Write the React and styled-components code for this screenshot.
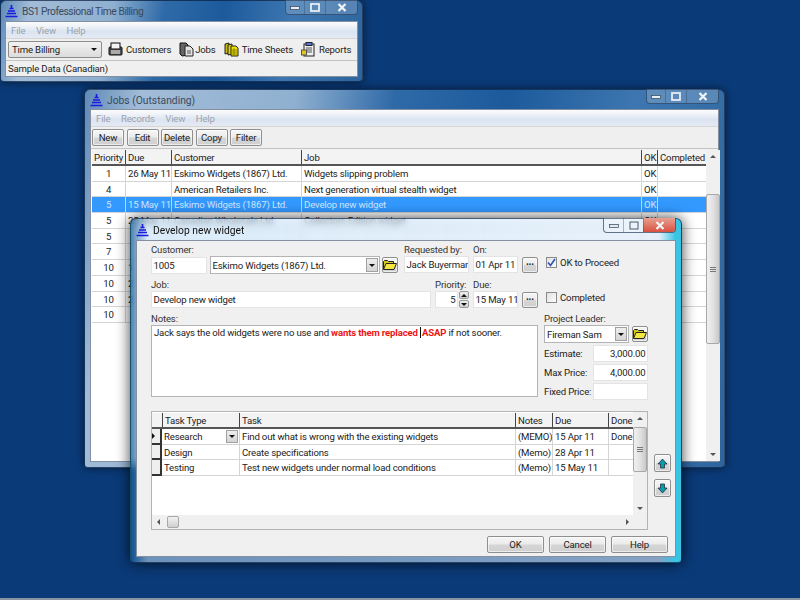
import React from 'react'
import styled, { createGlobalStyle } from 'styled-components'

const GlobalStyle = createGlobalStyle`
    html, body {
        margin: 0;
        padding: 0;
        background: #0a3a78;
    }
    * {
        box-sizing: border-box;
    }
`

const Desktop = styled.div`
    position: relative;
    width: 800px;
    height: 600px;
    overflow: hidden;
    background: #0a3a78;
    border-bottom: 2px solid #8a93a0;
    font-family: Roboto, "Liberation Sans", Arial, sans-serif;
    font-size: 9.6px;
    letter-spacing: -0.17px;
    color: #222;
    white-space: nowrap;
    filter: blur(0.3px);
`

const Window = styled.div`
    position: absolute;
    left: ${(p) => p.$x}px;
    top: ${(p) => p.$y}px;
    width: ${(p) => p.$w}px;
    height: ${(p) => p.$h}px;
    display: flex;
    flex-direction: column;
    padding: 0 ${(p) => p.$pad}px ${(p) => p.$pad}px;
    border-radius: 6px 6px 4px 4px;
    border: 1px solid rgba(10, 30, 60, 0.7);
    box-shadow: 0 0 ${(p) => (p.$active ? 14 : 8)}px rgba(0, 0, 0, ${(p) => (p.$active ? 0.75 : 0.55)});
    background: ${(p) =>
        p.$active
            ? 'linear-gradient(90deg, rgba(20,90,150,.75), rgba(190,220,245,.55) 3%, rgba(215,232,248,.6) 96%, #39c4e6 99%)'
            : 'linear-gradient(100deg, #5f8ab8, #a2bcd8 8%, #8fb0d0 30%, #2f6aa8 44%, #1c5a9c 60%, #3d76b0 78%, #2e659f)'};
    backdrop-filter: ${(p) => (p.$active ? 'blur(3px)' : 'none')};
`

const TitleBar = styled.div`
    display: flex;
    align-items: flex-start;
    justify-content: space-between;
    height: ${(p) => p.$h}px;
    flex: none;
`

const TitleLeft = styled.div`
    display: flex;
    align-items: center;
    gap: 4px;
    padding-top: ${(p) => p.$top}px;
    font-size: 10.3px;
    letter-spacing: ${(p) => p.$ls || 0}px;
    color: ${(p) => (p.$active ? '#111' : '#3b4a5c')};
`

const CaptionButtons = styled.div`
    display: flex;
    margin-top: -1px;
    height: 15px;
    border: 1px solid rgba(40, 60, 90, 0.7);
    border-top: none;
    border-radius: 0 0 4px 4px;
    overflow: hidden;
    background: rgba(255, 255, 255, 0.18);
`

const CaptionButton = styled.div`
    display: flex;
    align-items: center;
    justify-content: center;
    width: ${(p) => p.$w}px;
    border-left: ${(p) => (p.$first ? 'none' : '1px solid rgba(40, 60, 90, 0.35)')};
    background: ${(p) => (p.$red ? 'linear-gradient(#e8a090, #d9503f)' : 'transparent')};
`

const Client = styled.div`
    flex: 1;
    min-height: 0;
    display: flex;
    flex-direction: column;
    background: #f0f0f0;
    border: 1px solid rgba(60, 80, 110, 0.6);
`

const MenuBar = styled.div`
    display: flex;
    gap: ${(p) => p.$gap}px;
    align-items: center;
    flex: none;
    height: 16px;
    padding-left: 5px;
    color: #99a2ae;
    background: linear-gradient(#fbfbfd, #f0f3f8 25%, #dbe4f1 60%, #e4eaf4);
`

const ToolBar = styled.div`
    display: flex;
    align-items: center;
    flex: none;
    height: ${(p) => p.$h}px;
    gap: ${(p) => p.$gap}px;
    padding-left: ${(p) => p.$left}px;
    background: #efefef;
    border-top: 1px solid #d5d5d5;
    border-bottom: 1px solid #c4c4c4;
`

const ModeSelect = styled.div`
    display: flex;
    align-items: center;
    justify-content: space-between;
    flex: none;
    width: 94px;
    height: 17px;
    margin-right: -2px;
    padding: 0 4px 0 3px;
    border: 1px solid #8c8c8c;
    border-radius: 2px;
    background: linear-gradient(#f2f2f2, #dcdcdc);
`

const ToolLink = styled.div`
    display: flex;
    align-items: center;
    gap: ${(p) => p.$gap}px;
`

const StatusBar = styled.div`
    flex: 1;
    display: flex;
    align-items: center;
    padding-left: 2px;
    background: #f0f0f0;
`

const Button = styled.div`
    display: flex;
    align-items: center;
    justify-content: center;
    flex: none;
    width: ${(p) => p.$w}px;
    height: ${(p) => p.$h}px;
    border: 1px solid #8f8f8f;
    border-radius: 2px;
    background: linear-gradient(#f6f6f6, #ebebeb 48%, #d6d6d6 52%, #cfcfcf);
    box-shadow: inset 0 0 0 1px rgba(255, 255, 255, 0.6);
`

const TableWrap = styled.div`
    flex: 1;
    min-height: 0;
    display: flex;
    padding-left: 1px;
    margin-top: 1px;
    background: #fff;
`

const JobsTable = styled.div`
    flex: 1;
    background: #fff;
`

const JobRow = styled.div`
    display: grid;
    grid-template-columns: 33px 46px 130px 340px 16px 49px;
    height: 15.7px;
    line-height: 15px;
    background: ${(p) => (p.$selected ? '#3399ff' : '#fff')};
    color: ${(p) => (p.$selected ? '#cfe6ff' : '#222')};
`

const HeaderRow = styled.div`
    display: grid;
    grid-template-columns: ${(p) => p.$cols};
    height: ${(p) => p.$h}px;
    line-height: ${(p) => p.$h - 1}px;
    background: #f3f3f3;
    border-bottom: 2px solid #555;
`

const HeaderCell = styled.div`
    padding-left: 2px;
    overflow: hidden;
    border-left: ${(p) => (p.$first ? 'none' : '1px solid #444')};
`

const Cell = styled.div`
    padding-left: ${(p) => (p.$center ? 0 : 2)}px;
    text-align: ${(p) => (p.$center ? 'center' : 'left')};
    overflow: hidden;
    border-left: ${(p) => (p.$first ? 'none' : '1px solid #d4d4d4')};
    border-bottom: 1px solid #d4d4d4;
`

const ScrollBar = styled.div`
    display: flex;
    flex-direction: column;
    align-items: center;
    justify-content: space-between;
    flex: none;
    width: ${(p) => p.$w}px;
    padding: 5px 0;
    background: #f0f0f0;
    position: relative;
`

const Thumb = styled.div`
    position: absolute;
    left: 0;
    right: 0;
    top: ${(p) => p.$top}px;
    height: ${(p) => p.$h}px;
    display: flex;
    align-items: center;
    justify-content: center;
    border: 1px solid #a8a8a8;
    border-radius: 2px;
    background: linear-gradient(90deg, #f0f0f0, #e2e2e2 50%, #c8c8c8);
`

const Grip = styled.div`
    width: 6px;
    height: 5px;
    border-top: 1px solid #777;
    border-bottom: 1px solid #777;
    background: linear-gradient(transparent 40%, #777 40%, #777 60%, transparent 60%);
`

const Triangle = styled.span`
    display: inline-block;
    width: 0;
    height: 0;
    flex: none;
    border-left: ${(p) => (p.$dir === 'right' ? '3px solid ' + p.$c : p.$dir === 'left' ? 'none' : '3.5px solid transparent')};
    border-right: ${(p) => (p.$dir === 'left' ? '3px solid ' + p.$c : p.$dir === 'right' ? 'none' : '3.5px solid transparent')};
    border-top: ${(p) => (p.$dir === 'down' ? '3.5px solid ' + p.$c : p.$dir === 'up' ? 'none' : '3.5px solid transparent')};
    border-bottom: ${(p) => (p.$dir === 'up' ? '3.5px solid ' + p.$c : p.$dir === 'down' ? 'none' : '3.5px solid transparent')};
`

const DialogBody = styled.div`
    flex: 1;
    display: flex;
    flex-direction: column;
    padding: 2px 7px 0 14px;
    background: #f0f0f0;
`

const FormRow = styled.div`
    display: flex;
    gap: 6px;
    margin-bottom: ${(p) => p.$mb || 0}px;
`

const Field = styled.div`
    display: flex;
    flex-direction: column;
    flex: none;
    width: ${(p) => (p.$w ? p.$w + 'px' : 'auto')};
    margin-left: ${(p) => p.$ml || 0}px;
`

const Label = styled.div`
    height: 13px;
    line-height: 13px;
    color: #333;
`

const Controls = styled.div`
    display: flex;
    align-items: center;
    gap: ${(p) => p.$gap}px;
`

const Input = styled.div`
    flex: none;
    width: ${(p) => p.$w}px;
    height: 17px;
    line-height: 15px;
    padding: 0 1.5px;
    text-align: ${(p) => (p.$right ? 'right' : 'left')};
    overflow: hidden;
    background: #fff;
    border: 1px solid #e4e4e4;
`

const Combo = styled.div`
    display: flex;
    align-items: center;
    justify-content: space-between;
    flex: none;
    width: ${(p) => p.$w}px;
    height: 18px;
    padding: 1px 1px 1px 2px;
    background: #fff;
    border: 1px solid #b4b4b4;
`

const DropButton = styled.div`
    display: flex;
    align-items: center;
    justify-content: center;
    flex: none;
    width: ${(p) => p.$w || 12}px;
    height: ${(p) => p.$h || 14}px;
    border: 1px solid #a0a0a0;
    background: linear-gradient(#eeeeee, #d4d4d4);
`

const IconButton = styled(Button)`
    width: 16px;
    height: 16px;
    padding: 0;
`

const DotsButton = styled(Button)`
    width: 16px;
    height: 16px;
    font-weight: bold;
    font-size: 10px;
    line-height: 16px;
    align-items: flex-end;
    padding-bottom: 2px;
`

const Spinner = styled.div`
    display: flex;
    flex-direction: column;
    justify-content: center;
    gap: 1px;
    flex: none;
    width: 10px;
    height: 17px;
`

const SpinPart = styled.div`
    flex: 1;
    display: flex;
    align-items: center;
    justify-content: center;
    border: 1px solid #999;
    border-radius: 2px;
    background: linear-gradient(#eee, #d2d2d2);
`

const CheckRow = styled.div`
    display: flex;
    align-items: center;
    gap: 3px;
    height: 17px;
    margin-top: ${(p) => p.$mt}px;
    margin-left: 2px;
`

const CheckBox = styled.div`
    display: flex;
    align-items: center;
    justify-content: center;
    width: 11px;
    height: 11px;
    border: 1px solid #8a8a8a;
    background: linear-gradient(135deg, #e2e2e2, #fbfbfb);
`

const Notes = styled.div`
    width: 387px;
    height: 72px;
    padding: 0 2px;
    line-height: 13px;
    background: #fff;
    border: 1px solid #b4b4b4;
`

const Hot = styled.b`
    color: #ee1515;
`

const Caret = styled.span`
    border-left: 1px solid #111;
    margin-right: 1px;
`

const SidePanel = styled.div`
    display: flex;
    flex-direction: column;
    width: 104px;
`

const PriceRow = styled.div`
    display: flex;
    align-items: center;
    justify-content: space-between;
    height: 17px;
    margin-top: 2px;
`

const GridArea = styled.div`
    display: flex;
    gap: 6px;
    margin-top: 11px;
`

const TaskPanel = styled.div`
    display: grid;
    grid-template-columns: 1fr 14px;
    grid-template-rows: 1fr 14px;
    width: 497px;
    height: 119px;
    background: #f0f0f0;
    border: 1px solid #b4b4b4;
`

const TaskGrid = styled.div`
    padding-top: 1px;
    background: #fff;
`

const TaskRow = styled.div`
    display: grid;
    grid-template-columns: 10px 77px 276px 37px 56px 25px;
    height: 15.7px;
    line-height: 15px;
`

const Indicator = styled.div`
    display: flex;
    align-items: center;
    background: #efefef;
    border-right: 2px solid #333;
    border-bottom: 2px solid #333;
    border-radius: 0 0 1px 0;
`

const TypeCell = styled(Cell)`
    display: flex;
    align-items: center;
    justify-content: space-between;
    padding-right: 1px;
    border-left: none;
`

const HorizontalBar = styled.div`
    position: relative;
    display: flex;
    align-items: center;
    justify-content: space-between;
    padding: 0 4px 0 5px;
    background: #f0f0f0;
`

const HThumb = styled.div`
    position: absolute;
    left: 15px;
    top: 1px;
    width: 12px;
    height: 12px;
    border: 1px solid #a8a8a8;
    border-radius: 2px;
    background: linear-gradient(#f2f2f2, #cfcfcf);
`

const MoveButtons = styled.div`
    display: flex;
    flex-direction: column;
    gap: 7px;
    margin-top: 43px;
`

const DialogFooter = styled.div`
    display: flex;
    justify-content: flex-end;
    gap: 5px;
    margin-top: 6px;
`

const Logo = () => (
    <svg width="13" height="13" viewBox="0 0 13 13">
        <path d="M6.5 0v3M4.5 3.5h4M3 6h7M2 8.5h9M0.5 11.5h12" stroke="#1a1ae0" strokeWidth="1.6" fill="none" />
    </svg>
)

const CustomersIcon = () => (
    <svg width="15" height="15" viewBox="0 0 15 15">
        <rect x="1" y="5" width="13" height="8" rx="1" fill="#555" stroke="#111" />
        <rect x="3" y="1" width="9" height="6" fill="#e8e8e8" stroke="#111" />
        <path d="M4 3h7M4 5h7M3 9h9M3 11h9" stroke="#fff" />
    </svg>
)

const JobsIcon = () => (
    <svg width="15" height="15" viewBox="0 0 15 15">
        <path d="M1 1h6l2 2v10l-6 1-2-2z" fill="#666" stroke="#111" />
        <path d="M6 4h5l3 3v7H6z" fill="#e4e4e4" stroke="#222" />
        <path d="M8 9h4M8 11h4" stroke="#555" />
    </svg>
)

const SheetsIcon = () => (
    <svg width="15" height="15" viewBox="0 0 15 15">
        <path d="M1 2l4-1v10l-4 1z" fill="#c9b800" stroke="#222" />
        <path d="M4 3l4-1v10l-4 1z" fill="#e0d000" stroke="#222" />
        <path d="M7 4h5l2 2v8H7z" fill="#f2e400" stroke="#222" />
        <path d="M8 8h5M8 10h5M8 12h5M10 6v7" stroke="#6b6400" strokeWidth="0.7" />
    </svg>
)

const ReportsIcon = () => (
    <svg width="15" height="15" viewBox="0 0 15 15">
        <rect x="3" y="2" width="10" height="12" fill="#eee" stroke="#222" />
        <rect x="5" y="0.5" width="6" height="3" fill="#5577cc" stroke="#223" />
        <path d="M5 6h6M5 8h6M5 10h6" stroke="#555" />
        <rect x="0.5" y="8" width="5" height="5" fill="#e0c820" stroke="#555" />
    </svg>
)

const FolderIcon = () => (
    <svg width="14" height="12" viewBox="0 0 14 12">
        <path d="M0.5 10.5V2.5l1-1h3l1 1h5v2" fill="#d8c820" stroke="#222" />
        <path d="M0.5 10.5l2.5-6h10.5l-2.5 6z" fill="#f2e640" stroke="#222" />
    </svg>
)

const MoveArrow = ({ up }) => (
    <svg width="11" height="11" viewBox="0 0 11 11">
        <path
            d={up ? 'M5.5 1L10 6H7.5v4h-4V6H1z' : 'M5.5 10L10 5H7.5V1h-4v4H1z'}
            fill="#0f9aa8"
            stroke="#123"
            strokeWidth="0.7"
        />
    </svg>
)

const Captions = ({ w, active }) => (
    <CaptionButtons>
        <CaptionButton $first $w={w[0]}>
            <svg width="10" height="6" viewBox="0 0 10 6">
                <rect x="0.5" y="2.5" width="9" height="3" fill={active ? '#dfe8f2' : '#e6edf5'} stroke="#345" strokeWidth="0.7" />
            </svg>
        </CaptionButton>
        <CaptionButton $w={w[1]}>
            <svg width="10" height="9" viewBox="0 0 10 9">
                <rect
                    x="1"
                    y="1"
                    width="8"
                    height="7"
                    fill="none"
                    stroke={active ? '#4a5a6c' : '#e6edf5'}
                    strokeWidth={active ? 1 : 1.8}
                />
            </svg>
        </CaptionButton>
        <CaptionButton $w={w[2]} $red={active}>
            <svg width="10" height="9" viewBox="0 0 10 9">
                <path d="M1.5 1l7 7M8.5 1l-7 7" stroke="#f2f5f8" strokeWidth="2.2" />
            </svg>
        </CaptionButton>
    </CaptionButtons>
)

const jobColumns = [
    { name: 'Priority', key: 'priority' },
    { name: 'Due', key: 'due' },
    { name: 'Customer', key: 'customer' },
    { name: 'Job', key: 'job' },
    { name: 'OK', key: 'ok' },
    { name: 'Completed', key: 'done' },
]

// rows 4 and up sit behind the dialog, only their first characters show
const jobs = [
    { priority: '1', due: '26 May 11', customer: 'Eskimo Widgets (1867) Ltd.', job: 'Widgets slipping problem', ok: 'OK' },
    { priority: '4', due: '', customer: 'American Retailers Inc.', job: 'Next generation virtual stealth widget', ok: 'OK' },
    { priority: '5', due: '15 May 11', customer: 'Eskimo Widgets (1867) Ltd.', job: 'Develop new widget', ok: 'OK', selected: true },
    { priority: '5', due: '25 May 11', customer: 'Canadian Wholesale Ltd.', job: 'Collectors Edition widget', ok: 'OK' },
    { priority: '5', due: '', customer: '', job: '', ok: '' },
    { priority: '7', due: '', customer: '', job: '', ok: '' },
    { priority: '10', due: '1', customer: '', job: '', ok: '' },
    { priority: '10', due: '2', customer: '', job: '', ok: '' },
    { priority: '10', due: '2', customer: '', job: '', ok: '' },
    { priority: '10', due: '', customer: '', job: '', ok: '' },
]

const tasks = [
    { type: 'Research', task: 'Find out what is wrong with the existing widgets', notes: '(MEMO)', due: '15 Apr 11', done: 'Done', current: true },
    { type: 'Design', task: 'Create specifications', notes: '(Memo)', due: '28 Apr 11', done: '' },
    { type: 'Testing', task: 'Test new widgets under normal load conditions', notes: '(Memo)', due: '15 May 11', done: '' },
]

const MainWindow = () => (
    <Window $x={0} $y={0} $w={363} $h={82} $pad={4}>
        <TitleBar $h={20}>
            <TitleLeft $top={4} $ls={-0.45}>
                <Logo />
                BS1 Professional Time Billing
            </TitleLeft>
            <Captions w={[18, 21, 32]} />
        </TitleBar>
        <Client>
            <MenuBar $gap={10.5}>
                <span>File</span>
                <span>View</span>
                <span>Help</span>
            </MenuBar>
            <ToolBar $h={23} $gap={8} $left={2}>
                <ModeSelect>
                    Time Billing
                    <Triangle $dir="down" $c="#111" />
                </ModeSelect>
                <ToolLink $gap={3}>
                    <CustomersIcon />
                    Customers
                </ToolLink>
                <ToolLink $gap={1}>
                    <JobsIcon />
                    Jobs
                </ToolLink>
                <ToolLink $gap={3}>
                    <SheetsIcon />
                    Time Sheets
                </ToolLink>
                <ToolLink $gap={3}>
                    <ReportsIcon />
                    Reports
                </ToolLink>
            </ToolBar>
            <StatusBar>Sample Data (Canadian)</StatusBar>
        </Client>
    </Window>
)

const JobsWindow = () => (
    <Window $x={84} $y={89} $w={641} $h={379} $pad={5}>
        <TitleBar $h={19}>
            <TitleLeft $top={4}>
                <Logo />
                Jobs (Outstanding)
            </TitleLeft>
            <Captions w={[18, 21, 32]} />
        </TitleBar>
        <Client>
            <MenuBar $gap={10.5}>
                <span>File</span>
                <span>Records</span>
                <span>View</span>
                <span>Help</span>
            </MenuBar>
            <ToolBar $h={23} $gap={2.5} $left={1}>
                {['New', 'Edit', 'Delete', 'Copy', 'Filter'].map((name) => (
                    <Button key={name} $w={32} $h={17}>
                        {name}
                    </Button>
                ))}
            </ToolBar>
            <TableWrap>
                <JobsTable>
                    <HeaderRow $cols="33px 46px 130px 340px 16px 49px" $h={16}>
                        {jobColumns.map((col, i) => (
                            <HeaderCell key={col.key} $first={i === 0}>
                                {col.name}
                            </HeaderCell>
                        ))}
                    </HeaderRow>
                    {jobs.map((row, i) => (
                        <JobRow key={i} $selected={row.selected}>
                            {jobColumns.map((col, c) => (
                                <Cell key={col.key} $first={c === 0} $center={c === 0}>
                                    {row[col.key]}
                                </Cell>
                            ))}
                        </JobRow>
                    ))}
                </JobsTable>
                <ScrollBar $w={14}>
                    <Triangle $dir="up" $c="#555" />
                    <Thumb $top={44} $h={150}>
                        <Grip />
                    </Thumb>
                    <Triangle $dir="down" $c="#555" />
                </ScrollBar>
            </TableWrap>
        </Client>
    </Window>
)

const DialogWindow = () => (
    <Window $x={130} $y={218} $w={552} $h={345} $pad={5} $active>
        <TitleBar $h={21}>
            <TitleLeft $top={5} $active>
                <Logo />
                Develop new widget
            </TitleLeft>
            <Captions w={[19, 20, 32]} active />
        </TitleBar>
        <Client>
            <DialogBody>
                <FormRow $mb={4}>
                    <Field>
                        <Label>Customer:</Label>
                        <Controls $gap={2.5}>
                            <Input $w={56}>1005</Input>
                            <Combo $w={170}>
                                Eskimo Widgets (1867) Ltd.
                                <DropButton>
                                    <Triangle $dir="down" $c="#111" />
                                </DropButton>
                            </Combo>
                            <IconButton>
                                <FolderIcon />
                            </IconButton>
                        </Controls>
                    </Field>
                    <Field $w={65}>
                        <Label>Requested by:</Label>
                        <Input $w={65}>Jack Buyerman</Input>
                    </Field>
                    <Field style={{ marginLeft: -2 }}>
                        <Label>On:</Label>
                        <Controls $gap={4}>
                            <Input $w={45}>01 Apr 11</Input>
                            <DotsButton>...</DotsButton>
                        </Controls>
                    </Field>
                    <CheckRow $mt={11}>
                        <CheckBox>
                            <svg width="9" height="9" viewBox="0 0 9 9">
                                <path d="M1 4.5l2.5 3L8 1" stroke="#2a52b0" strokeWidth="1.6" fill="none" />
                            </svg>
                        </CheckBox>
                        OK to Proceed
                    </CheckRow>
                </FormRow>
                <FormRow $mb={4}>
                    <Field>
                        <Label>Job:</Label>
                        <Input $w={280}>Develop new widget</Input>
                    </Field>
                    <Field style={{ marginLeft: -2 }}>
                        <Label>Priority:</Label>
                        <Controls $gap={1}>
                            <Input $w={23} $right>
                                5
                            </Input>
                            <Spinner>
                                <SpinPart>
                                    <Triangle $dir="up" $c="#111" />
                                </SpinPart>
                                <SpinPart>
                                    <Triangle $dir="down" $c="#111" />
                                </SpinPart>
                            </Spinner>
                        </Controls>
                    </Field>
                    <Field style={{ marginLeft: -2 }}>
                        <Label>Due:</Label>
                        <Controls $gap={4}>
                            <Input $w={45}>15 May 11</Input>
                            <DotsButton>...</DotsButton>
                        </Controls>
                    </Field>
                    <CheckRow $mt={11}>
                        <CheckBox />
                        Completed
                    </CheckRow>
                </FormRow>
                <FormRow>
                    <Field>
                        <Label>Notes:</Label>
                        <Notes>
                            Jack says the old widgets were no use and <Hot>wants them replaced </Hot>
                            <Caret />
                            <Hot>ASAP</Hot> if not sooner.
                        </Notes>
                    </Field>
                    <SidePanel>
                        <Label>Project Leader:</Label>
                        <Controls $gap={3}>
                            <Combo $w={85}>
                                Fireman Sam
                                <DropButton>
                                    <Triangle $dir="down" $c="#111" />
                                </DropButton>
                            </Combo>
                            <IconButton>
                                <FolderIcon />
                            </IconButton>
                        </Controls>
                        <PriceRow>
                            Estimate:
                            <Input $w={55} $right>
                                3,000.00
                            </Input>
                        </PriceRow>
                        <PriceRow>
                            Max Price:
                            <Input $w={55} $right>
                                4,000.00
                            </Input>
                        </PriceRow>
                        <PriceRow>
                            Fixed Price:
                            <Input $w={55} $right />
                        </PriceRow>
                    </SidePanel>
                </FormRow>
                <GridArea>
                    <TaskPanel>
                        <TaskGrid>
                            <HeaderRow $cols="10px 77px 276px 37px 56px 25px" $h={16}>
                                <HeaderCell $first />
                                <HeaderCell>Task Type</HeaderCell>
                                <HeaderCell>Task</HeaderCell>
                                <HeaderCell>Notes</HeaderCell>
                                <HeaderCell>Due</HeaderCell>
                                <HeaderCell>Done</HeaderCell>
                            </HeaderRow>
                            {tasks.map((task) => (
                                <TaskRow key={task.type}>
                                    <Indicator>{task.current && <Triangle $dir="right" $c="#111" />}</Indicator>
                                    <TypeCell>
                                        {task.type}
                                        {task.current && (
                                            <DropButton $h={13}>
                                                <Triangle $dir="down" $c="#111" />
                                            </DropButton>
                                        )}
                                    </TypeCell>
                                    <Cell>{task.task}</Cell>
                                    <Cell>{task.notes}</Cell>
                                    <Cell>{task.due}</Cell>
                                    <Cell>{task.done}</Cell>
                                </TaskRow>
                            ))}
                        </TaskGrid>
                        <ScrollBar $w={14}>
                            <Triangle $dir="up" $c="#555" />
                            <Thumb $top={15} $h={45}>
                                <Grip />
                            </Thumb>
                            <Triangle $dir="down" $c="#555" />
                        </ScrollBar>
                        <HorizontalBar>
                            <Triangle $dir="left" $c="#555" />
                            <HThumb />
                            <Triangle $dir="right" $c="#555" />
                        </HorizontalBar>
                    </TaskPanel>
                    <MoveButtons>
                        <Button $w={17} $h={18}>
                            <MoveArrow up />
                        </Button>
                        <Button $w={17} $h={18}>
                            <MoveArrow />
                        </Button>
                    </MoveButtons>
                </GridArea>
                <DialogFooter>
                    {['OK', 'Cancel', 'Help'].map((name) => (
                        <Button key={name} $w={57} $h={17}>
                            {name}
                        </Button>
                    ))}
                </DialogFooter>
            </DialogBody>
        </Client>
    </Window>
)

const App = () => (
    <Desktop>
        <GlobalStyle />
        <MainWindow />
        <JobsWindow />
        <DialogWindow />
    </Desktop>
)

export default App
